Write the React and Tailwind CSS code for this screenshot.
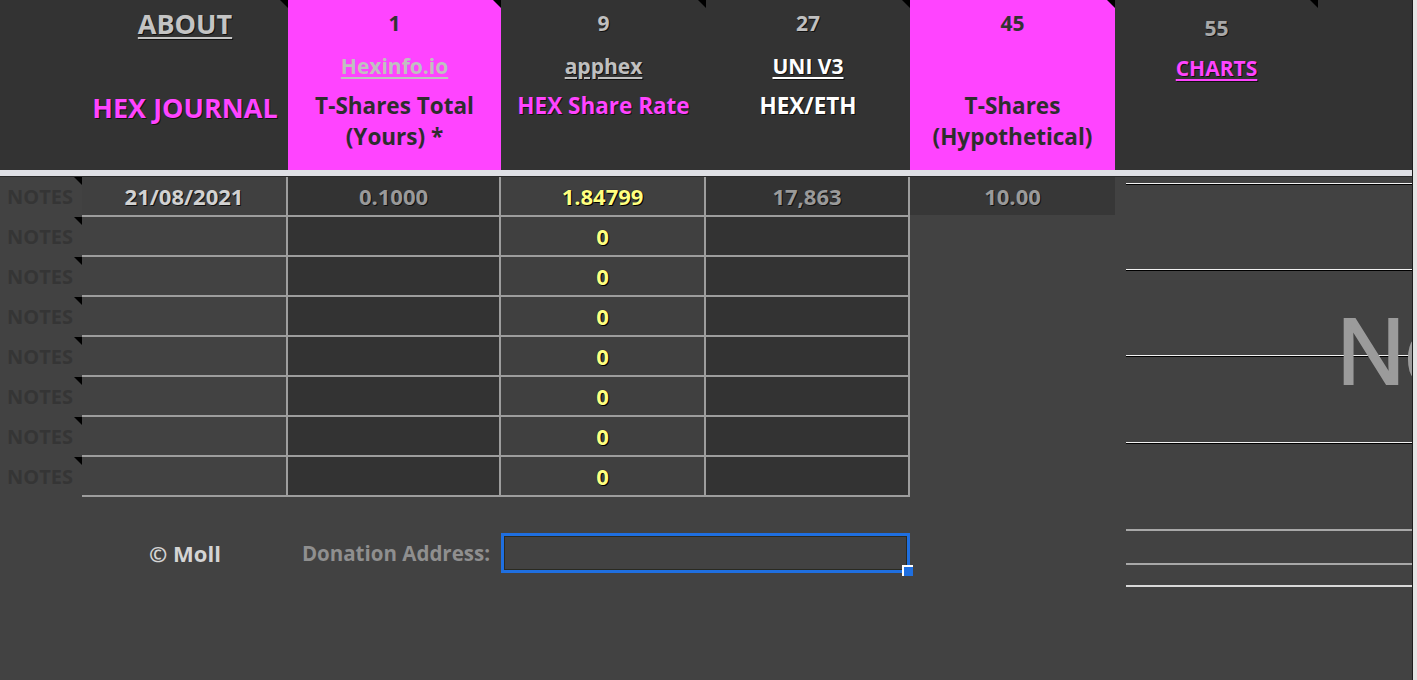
import React from "react";

const FONT = { fontFamily: "'Open Sans', Lato, sans-serif" };

function Tri({ className = "" }) {
  return (
    <div
      className={
        "absolute right-0 top-0 w-0 h-0 border-l-[8px] border-l-transparent border-t-[8px] border-t-black " +
        className
      }
    />
  );
}

function HeaderCell({ bg, num, numColor, link, linkColor, title, titleColor, extra = "" }) {
  return (
    <div className={"relative flex flex-col items-center text-center " + bg + " " + extra}>
      <Tri />
      <div className={"h-[46px] leading-[46px] text-[21px] font-bold " + numColor}>{num}</div>
      <div className={"h-[40px] leading-[40px] text-[21px] font-bold underline underline-offset-[3px] " + linkColor}>
        {link}
      </div>
      {title && (
        <div className={"pt-[4px] leading-[31px] text-[22.5px] font-bold " + titleColor}>{title}</div>
      )}
    </div>
  );
}

const shadow = "[text-shadow:1px_1px_0_#111]";
const yellow = "text-[#ffff80] [text-shadow:0_0_1px_#000,1px_1px_0_#000]";

export default function App() {
  const rows = Array.from({ length: 8 }, (_, i) => i);
  return (
    <div className="w-[1417px] h-[680px] bg-[#424242] overflow-hidden flex" style={FONT}>
      <div className="w-[1412px] flex flex-col">
        {/* Header */}
        <div className="grid grid-cols-[82px_206px_213px_205px_204px_205px_203px_94px] h-[170px] bg-[#333333]">
          <div />
          <div className="relative flex flex-col items-center">
            <Tri />
            <div className={"h-[46px] leading-[48px] text-[27px] font-bold text-[#c4c4c4] underline underline-offset-[3px] " + shadow}>
              ABOUT
            </div>
            <div className="h-[40px]" />
            <div className={"pt-[6px] leading-[31px] text-[27px] font-bold text-[#ff44ff] " + shadow}>
              HEX JOURNAL
            </div>
          </div>
          <HeaderCell
            bg="bg-[#ff44ff]"
            num="1"
            numColor="text-[#333333]"
            link="Hexinfo.io"
            linkColor="text-[#c0c0c0]"
            title={<>T-Shares Total<br />(Yours) *</>}
            titleColor="text-[#2e2e2e]"
          />
          <HeaderCell
            bg="bg-[#333333]"
            num="9"
            numColor={"text-[#c0c0c0] " + shadow}
            link="apphex"
            linkColor={"text-[#c0c0c0] " + shadow}
            title="HEX Share Rate"
            titleColor={"text-[#ff44ff] " + shadow}
          />
          <HeaderCell
            bg="bg-[#333333]"
            num="27"
            numColor={"text-[#c0c0c0] " + shadow}
            link="UNI V3"
            linkColor={"text-white " + shadow}
            title="HEX/ETH"
            titleColor={"text-white " + shadow}
          />
          <HeaderCell
            bg="bg-[#ff44ff]"
            num="45"
            numColor="text-[#333333]"
            link=""
            linkColor=""
            title={<>T-Shares<br />(Hypothetical)</>}
            titleColor="text-[#2e2e2e]"
          />
          <div className="relative flex flex-col items-center pt-[5px]">
            <Tri />
            <div className={"h-[46px] leading-[46px] text-[21px] font-bold text-[#a8a8a8] " + shadow}>55</div>
            <div className={"h-[34px] leading-[34px] text-[21px] font-bold text-[#ff44ff] underline underline-offset-[3px] " + shadow}>
              CHARTS
            </div>
          </div>
          <div />
        </div>
        {/* Separator */}
        <div className="h-[6px] bg-[#dfe0e5]" />
        <div className="h-px bg-[#2a2a2a]" />

        {/* Body */}
        <div className="flex flex-1">
          <div className="w-[1115px] flex flex-col">
            {rows.map((i) => (
              <div key={i} className="grid grid-cols-[82px_206px_213px_205px_204px_205px] h-[40px] text-[22px] font-bold">
                <div className="relative pl-[7px] leading-[40px] text-[20px] text-[#353535]">
                  <Tri />
                  NOTES
                </div>
                <div
                  className={
                    "border-r-2 border-b-2 border-[#9d9d9d] flex items-center justify-center " +
                    (i === 0 ? "bg-[#404040] text-[#d2d2d2] " + shadow : "")
                  }
                >
                  {i === 0 ? "21/08/2021" : ""}
                </div>
                <div className={"border-r-2 border-b-2 border-[#9d9d9d] bg-[#333333] flex items-center justify-center text-[#9a9a9a] " + shadow}>
                  {i === 0 ? "0.1000" : ""}
                </div>
                <div className={"border-r-2 border-b-2 border-[#9d9d9d] bg-[#404040] flex items-center justify-center " + yellow}>
                  {i === 0 ? "1.84799" : "0"}
                </div>
                <div className={"border-r-2 border-b-2 border-[#9d9d9d] bg-[#333333] flex items-center justify-center text-[#9a9a9a] " + shadow}>
                  {i === 0 ? "17,863" : ""}
                </div>
                {i === 0 ? (
                  <div className={"h-[38px] bg-[#373737] flex items-center justify-center text-[#9a9a9a] " + shadow}>
                    10.00
                  </div>
                ) : (
                  <div />
                )}
              </div>
            ))}
            {/* Footer */}
            <div className="grid grid-cols-[82px_206px_213px_409px] h-[40px] mt-[36px] font-bold">
              <div />
              <div className="flex items-center justify-center text-[22px] text-[#d4d4d4]">© Moll</div>
              <div className="flex items-center justify-end pr-[11px] text-[20.5px] text-[#8f8f8f]">Donation Address:</div>
              <div className="relative">
                <div className="h-[40px] border-[3px] border-[#1f6fe0]">
                  <div className="h-full border border-[#2a2a20]" />
                </div>
                <div className="absolute right-[-3px] bottom-[-3px] w-[11px] h-[11px] bg-[#1f6fe0] border-t-2 border-l-2 border-white" />
              </div>
            </div>
          </div>

          {/* Right panel */}
          <div className="relative flex-1 overflow-hidden">
            <div className="ml-[11px] mt-[6px] flex flex-col">
              <div className="h-[2px] bg-[#f2f2f2] border-b border-black" />
              <div className="h-[84px]" />
              <div className="h-[2px] bg-[#f2f2f2] border-b border-black" />
              <div className="h-[84px]" />
              <div className="h-[2px] bg-[#f2f2f2] border-b border-black" />
              <div className="h-[85px]" />
              <div className="h-[2px] bg-[#f2f2f2] border-b border-black" />
              <div className="h-[85px]" />
              <div className="h-[2px] bg-[#a8a8a8]" />
              <div className="h-[32px]" />
              <div className="h-[2px] bg-[#a8a8a8]" />
              <div className="h-[20px]" />
              <div className="h-[2px] bg-[#d8d8d8]" />
            </div>
            <div
              className="absolute top-[128px] left-[222px] text-[94px] leading-none text-[#9b9b9b] whitespace-nowrap [-webkit-text-stroke:2px_#9b9b9b]"
              style={{ fontFamily: "'Liberation Sans', Arial, sans-serif" }}
            >
              Notes
            </div>
          </div>
        </div>
      </div>
      <div className="w-px bg-[#1e1e1e]" />
      <div className="flex-1 bg-[#e4e4e4]" />
    </div>
  );
}
